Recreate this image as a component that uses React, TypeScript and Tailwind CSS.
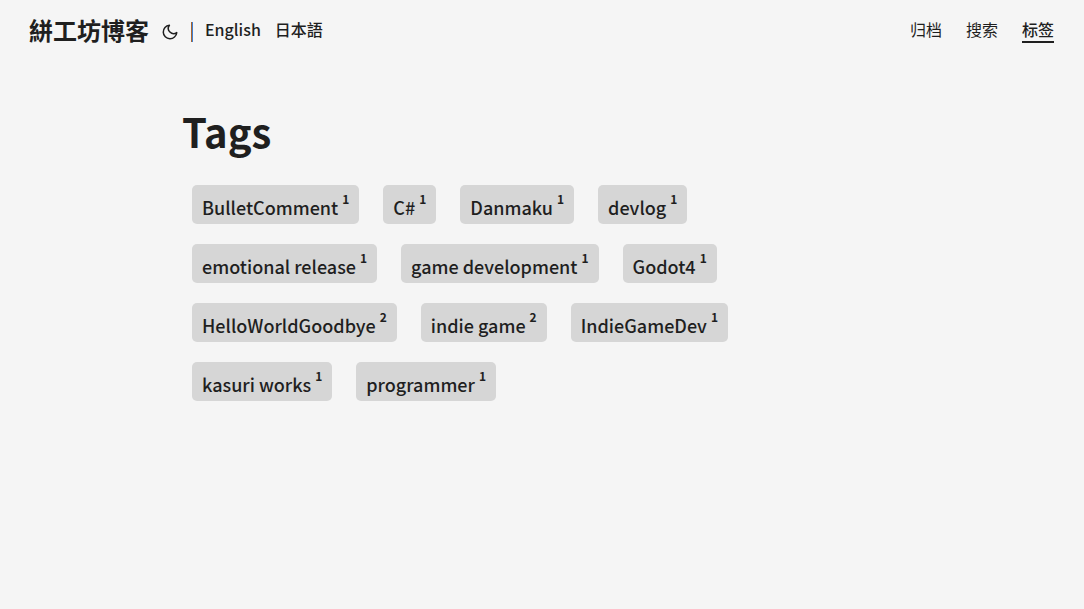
const tags = [
  ["BulletComment", 1], ["C#", 1], ["Danmaku", 1], ["devlog", 1],
  ["emotional release", 1], ["game development", 1], ["Godot4", 1],
  ["HelloWorldGoodbye", 2], ["indie game", 2], ["IndieGameDev", 1],
  ["kasuri works", 1], ["programmer", 1],
] as const;

function MoonIcon() {
  return (
    <svg viewBox="0 0 24 24" className="size-[18px]" fill="none" stroke="currentColor" strokeWidth="2" strokeLinecap="round" strokeLinejoin="round" aria-hidden="true">
      <path d="M21 12.79A9 9 0 1 1 11.21 3 7 7 0 0 0 21 12.79z" />
    </svg>
  );
}

export default function App() {
  return (
    <div className="min-h-screen bg-[#f5f5f5] font-['Noto_Sans_CJK_SC',sans-serif] text-[#1f1f1f]">
      <header className="flex h-[60px] items-center justify-between pr-[30px] pl-[29px]">
        <div className="flex items-center">
          <a href="#home" className="text-2xl font-bold">絣工坊博客</a>
          <button type="button" aria-label="Toggle theme" className="ml-3 pt-[3px]">
            <MoonIcon />
          </button>
          <span className="mt-1 ml-3 h-5 w-[2px] border-r border-l border-r-[#3f7fd0] border-l-[#a9642f]" />
          <nav aria-label="Language" className="ml-3 flex items-center gap-[14px] pb-[2px] font-medium">
            <a href="#en">English</a>
            <a href="#ja">日本語</a>
          </nav>
        </div>
        <nav aria-label="Main" className="flex gap-6">
          <a href="#archive">归档</a>
          <a href="#search">搜索</a>
          <a href="#tags" className="border-b-2 border-current font-medium">标签</a>
        </nav>
      </header>
      <main className="mx-auto max-w-[768px] px-6 pt-[45px]">
        <h1 className="text-[40px] leading-[52px] font-bold">Tags</h1>
        <ul className="mt-7 mr-3 ml-[10px] flex flex-wrap gap-x-6 gap-y-5">
          {tags.map(([name, count]) => (
            <li key={name}>
              <a href={`#${name}`} className="flex h-[39px] items-center rounded-[5px] bg-[#d6d6d6] px-[10px] pt-1 text-lg font-medium">
                {name}<sup className="ml-1 pb-1 text-xs font-bold">{count}</sup>
              </a>
            </li>
          ))}
        </ul>
      </main>
    </div>
  );
}
